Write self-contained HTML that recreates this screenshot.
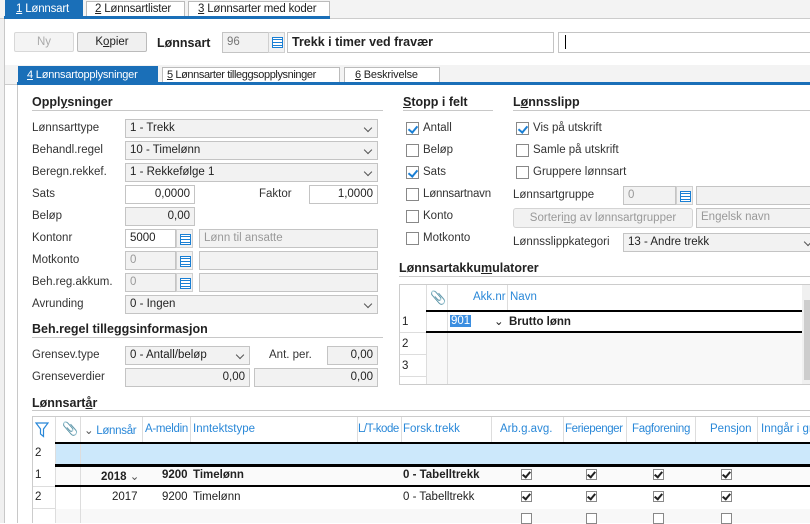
<!DOCTYPE html>
<html><head><meta charset="utf-8"><style>
*{box-sizing:border-box;margin:0;padding:0}
body{width:810px;height:523px;overflow:hidden;background:#fff;font-family:"Liberation Sans",Arial,sans-serif;font-size:11.5px;color:#222;position:relative}
.a{position:absolute}
.lbl{position:absolute;font-size:11.5px;color:#333;line-height:14px;white-space:nowrap}
.h{position:absolute;font-weight:bold;font-size:12.5px;color:#222;white-space:nowrap}
.hl{position:absolute;height:1px;background:#c8c8c8}
.in{position:absolute;height:19px;border:1px solid #c4c4c4;background:#fff;line-height:17px;padding:0 4px;font-size:11.5px;white-space:nowrap;overflow:hidden}
.ro{background:#f2f2f2;color:#999}
.r{text-align:right}
.sel{position:absolute;height:19px;border:1px solid #c4c4c4;background:#f2f2f2;line-height:17px;padding:0 4px;font-size:11.5px;white-space:nowrap}
.sel:after{content:"";position:absolute;right:6px;top:5px;width:5px;height:5px;border-right:1px solid #555;border-bottom:1px solid #555;transform:rotate(45deg)}
.ico{position:absolute;width:17px;height:19px;background:#f2f2f2;border:1px solid #d0d0d0}
.ico:before{content:"";position:absolute;left:3px;top:4px;width:9px;height:9px;border:1px solid #1a7fd4;background:repeating-linear-gradient(#fff 0 1px,#1a7fd4 1px 2px,#fff 2px 3px)}
.cb{position:absolute;width:13px;height:13px;border:1px solid #888;background:#fff}
.cb.k:after{content:"";position:absolute;left:3px;top:1px;width:4px;height:7px;border-right:2px solid #1a7fd4;border-bottom:2px solid #1a7fd4;transform:rotate(40deg)}
.tab{position:absolute;height:17px;line-height:17px;padding:0 4px;font-size:11.5px;border:1px solid #bbb;border-bottom:none;background:#fff;white-space:nowrap;overflow:hidden;letter-spacing:-0.2px}
.tab.on{background:#1a6fb8;color:#fff;border-color:#1a6fb8}
.g{position:absolute;font-size:11.5px;white-space:nowrap}
.gh{color:#2a88d8}
.vl{position:absolute;width:1px;background:#ddd}
.bl{position:absolute;height:2px;background:#000}
.cc{position:absolute;width:11px;height:11px;border:1px solid #888;background:#fff}
.cc.k:after{content:"";position:absolute;left:2px;top:0px;width:3px;height:6px;border-right:2px solid #222;border-bottom:2px solid #222;transform:rotate(40deg)}
u{text-decoration:underline}
</style></head><body>
<div class="a" style="left:0;top:0;width:4px;height:523px;background:#f0f0f0"></div>
<div class="a" style="left:0;top:0;width:810px;height:19px;background:#f3f3f3;border-bottom:1px solid #ccc"></div>
<div class="a" style="left:4px;top:19px;width:1px;height:504px;background:#c8c8c8"></div>
<div class="a" style="left:4px;top:16px;width:326px;height:3px;background:#1a6fb8"></div>
<div class="tab on" style="left:5px;top:0;width:78px;padding-left:10px"><u>1</u> Lønnsart</div>
<div class="tab" style="left:86px;top:1px;width:99px;height:15px;line-height:15px;padding-left:8px"><u>2</u> Lønnsartlister</div>
<div class="tab" style="left:188px;top:1px;width:142px;height:15px;line-height:15px;padding-left:9px"><u>3</u> Lønnsarter med koder</div>
<div class="a" style="left:14px;top:32px;width:60px;height:20px;border:1px solid #d8d8d8;border-radius:2px;background:#f4f4f4;color:#aaa;text-align:center;line-height:18px">Ny</div>
<div class="a" style="left:77px;top:32px;width:70px;height:20px;border:1px solid #bbb;border-radius:2px;background:#f0f0f0;text-align:center;line-height:18px">K<u>o</u>pier</div>
<div class="h" style="left:157px;top:36px;font-size:12.5px">Lønnsart</div>
<div class="in ro" style="left:222px;top:32px;width:47px;height:21px;line-height:19px;color:#777">96</div>
<div class="ico" style="left:268px;top:32px;height:21px"></div>
<div class="in" style="left:287px;top:32px;width:267px;height:21px;line-height:19px;font-weight:bold;font-size:12.5px">Trekk i timer ved fravær</div>
<div class="in" style="left:558px;top:32px;width:260px;height:21px"><span style="display:inline-block;width:1px;height:14px;background:#000;margin-top:2px;margin-left:2px"></span></div>
<div class="a" style="left:5px;top:65px;width:805px;height:20px;background:#f3f3f3;border-bottom:1px solid #ccc"></div>
<div class="a" style="left:17px;top:82px;width:793px;height:3px;background:#1a6fb8"></div>
<div class="a" style="left:17px;top:85px;width:1px;height:438px;background:#c8c8c8"></div>
<div class="tab on" style="left:18px;top:66px;width:140px;font-size:11px;padding-left:8px"><u>4</u> Lønnsartopplysninger</div>
<div class="tab" style="left:162px;top:67px;width:178px;height:15px;line-height:15px;font-size:11px;letter-spacing:-0.4px"><u>5</u> Lønnsarter tilleggsopplysninger</div>
<div class="tab" style="left:344px;top:67px;width:96px;height:15px;line-height:15px;font-size:11px;padding-left:10px"><u>6</u> Beskrivelse</div>
<div class="h" style="left:32px;top:95px">Oppl<u>y</u>sninger</div>
<div class="hl" style="left:32px;top:110px;width:351px"></div>
<div class="lbl" style="left:32px;top:121px">Lønnsarttype</div>
<div class="sel" style="left:125px;top:119px;width:253px">1 - Trekk</div>
<div class="lbl" style="left:32px;top:143px">Behandl.regel</div>
<div class="sel" style="left:125px;top:141px;width:253px">10 - Timelønn</div>
<div class="lbl" style="left:32px;top:165px">Beregn.rekkef.</div>
<div class="sel" style="left:125px;top:163px;width:253px">1 - Rekkefølge 1</div>
<div class="lbl" style="left:32px;top:187px">Sats</div>
<div class="in r" style="left:125px;top:185px;width:70px">0,0000</div>
<div class="lbl" style="left:259px;top:187px">Faktor</div>
<div class="in r" style="left:309px;top:185px;width:69px">1,0000</div>
<div class="lbl" style="left:32px;top:209px">Beløp</div>
<div class="in ro r" style="left:125px;top:207px;width:70px;color:#222">0,00</div>
<div class="lbl" style="left:32px;top:231px">Kontonr</div>
<div class="in" style="left:125px;top:229px;width:51px">5000</div>
<div class="ico" style="left:176px;top:229px"></div>
<div class="in ro" style="left:199px;top:229px;width:179px">Lønn til ansatte</div>
<div class="lbl" style="left:32px;top:253px">Motkonto</div>
<div class="in ro" style="left:125px;top:251px;width:51px">0</div>
<div class="ico" style="left:176px;top:251px"></div>
<div class="in ro" style="left:199px;top:251px;width:179px"></div>
<div class="lbl" style="left:32px;top:275px">Beh.reg.akkum.</div>
<div class="in ro" style="left:125px;top:273px;width:51px">0</div>
<div class="ico" style="left:176px;top:273px"></div>
<div class="in ro" style="left:199px;top:273px;width:179px"></div>
<div class="lbl" style="left:32px;top:297px">Avrunding</div>
<div class="sel" style="left:125px;top:295px;width:253px">0 - Ingen</div>
<div class="h" style="left:32px;top:322px">Beh.re<u>g</u>el tilleggsinformasjon</div>
<div class="hl" style="left:32px;top:337px;width:351px"></div>
<div class="lbl" style="left:32px;top:348px">Grensev.type</div>
<div class="sel" style="left:125px;top:346px;width:125px">0 - Antall/beløp</div>
<div class="lbl" style="left:269px;top:348px">Ant. per.</div>
<div class="in ro r" style="left:327px;top:346px;width:51px;color:#222">0,00</div>
<div class="lbl" style="left:32px;top:370px">Grenseverdier</div>
<div class="in ro r" style="left:125px;top:368px;width:125px;color:#222">0,00</div>
<div class="in ro r" style="left:254px;top:368px;width:124px;color:#222">0,00</div>
<div class="h" style="left:403px;top:95px"><u>S</u>topp i felt</div>
<div class="hl" style="left:403px;top:110px;width:90px"></div>
<div class="cb k" style="left:406px;top:122px"></div><div class="lbl" style="left:423px;top:121px">Antall</div>
<div class="cb" style="left:406px;top:144px"></div><div class="lbl" style="left:423px;top:143px">Beløp</div>
<div class="cb k" style="left:406px;top:166px"></div><div class="lbl" style="left:423px;top:165px">Sats</div>
<div class="cb" style="left:406px;top:188px"></div><div class="lbl" style="left:423px;top:187px;letter-spacing:-0.2px">Lønnsartnavn</div>
<div class="cb" style="left:406px;top:210px"></div><div class="lbl" style="left:423px;top:209px">Konto</div>
<div class="cb" style="left:406px;top:232px"></div><div class="lbl" style="left:423px;top:231px">Motkonto</div>
<div class="h" style="left:513px;top:95px">L<u>ø</u>nnsslipp</div>
<div class="hl" style="left:513px;top:110px;width:297px"></div>
<div class="cb k" style="left:516px;top:122px"></div><div class="lbl" style="left:533px;top:121px">Vis på utskrift</div>
<div class="cb" style="left:516px;top:144px"></div><div class="lbl" style="left:533px;top:143px">Samle på utskrift</div>
<div class="cb" style="left:516px;top:166px"></div><div class="lbl" style="left:533px;top:165px">Gruppere lønnsart</div>
<div class="lbl" style="left:513px;top:188px">Lønnsartgruppe</div>
<div class="in ro" style="left:623px;top:186px;width:53px">0</div>
<div class="ico" style="left:676px;top:186px"></div>
<div class="in ro" style="left:696px;top:186px;width:120px"></div>
<div class="a" style="left:513px;top:208px;width:180px;height:20px;border:1px solid #d4d4d4;border-radius:3px;background:#f2f2f2;color:#999;text-align:center;line-height:18px;white-space:nowrap">Sorteri<u>n</u>g av lønnsartgrupper</div>
<div class="in ro" style="left:696px;top:208px;width:120px;height:20px">Engelsk navn</div>
<div class="lbl" style="left:513px;top:235px">Lønnsslippkategori</div>
<div class="sel" style="left:623px;top:233px;width:195px">13 - Andre trekk</div>
<div class="h" style="left:399px;top:261px">Lønnsartakku<u>m</u>ulatorer</div>
<div class="hl" style="left:399px;top:276px;width:411px"></div>
<div class="a" style="left:399px;top:284px;width:411px;height:101px;border:1px solid #ccc;background:#fff"></div>
<div class="a" style="left:426px;top:332px;width:376px;height:52px;background:#f8f8f8"></div>
<div class="vl" style="left:426px;top:285px;height:99px"></div>
<div class="vl" style="left:447px;top:285px;height:99px"></div>
<div class="vl" style="left:507px;top:285px;height:26px"></div>
<div class="a" style="left:400px;top:332px;width:26px;height:1px;background:#ddd"></div>
<div class="a" style="left:400px;top:354px;width:26px;height:1px;background:#ddd"></div>
<div class="a" style="left:400px;top:376px;width:26px;height:1px;background:#ddd"></div>
<div class="a" style="left:802px;top:285px;width:8px;height:99px;background:#f0f0f0"></div>
<div class="a" style="left:804px;top:300px;width:6px;height:80px;background:#cdcdcd"></div>
<div class="g" style="left:430px;top:290px;color:#2a88d8;font-size:13px">&#x1F4CE;</div>
<div class="g gh" style="left:473px;top:291px">Akk.nr</div>
<div class="g gh" style="left:510px;top:291px">Navn</div>
<div class="bl" style="left:426px;top:310px;width:376px"></div>
<div class="bl" style="left:426px;top:331px;width:376px"></div>
<div class="g" style="left:402px;top:316px">1</div>
<div class="g" style="left:450px;top:315px;background:#3b8ee0;color:#fff;padding:0 1px">901</div>
<div class="g" style="left:494px;top:314px">&#8964;</div>
<div class="g" style="left:509px;top:316px;font-weight:bold">Brutto lønn</div>
<div class="g" style="left:402px;top:338px">2</div>
<div class="g" style="left:402px;top:360px">3</div>
<div class="h" style="left:32px;top:396px">Lønnsart<u>å</u>r</div>
<div class="hl" style="left:32px;top:410px;width:778px"></div>
<div class="a" style="left:32px;top:416px;width:778px;height:107px;border:1px solid #ccc;border-right:none;border-bottom:none;background:#fff"></div>
<div class="a" style="left:55px;top:443px;width:755px;height:22px;background:#cce8fb"></div>
<div class="a" style="left:55px;top:466px;width:755px;height:20px;background:#fafafa"></div>
<div class="a" style="left:55px;top:509px;width:755px;height:14px;background:#f8f8f8"></div>
<div class="vl" style="left:55px;top:417px;height:106px"></div>
<div class="vl" style="left:80px;top:417px;height:106px"></div>
<div class="vl" style="left:142px;top:417px;height:26px"></div>
<div class="vl" style="left:190px;top:417px;height:26px"></div>
<div class="vl" style="left:357px;top:417px;height:26px"></div>
<div class="vl" style="left:401px;top:417px;height:26px"></div>
<div class="vl" style="left:491px;top:417px;height:26px"></div>
<div class="vl" style="left:563px;top:417px;height:26px"></div>
<div class="vl" style="left:626px;top:417px;height:26px"></div>
<div class="vl" style="left:695px;top:417px;height:26px"></div>
<div class="vl" style="left:757px;top:417px;height:26px"></div>
<div class="a" style="left:33px;top:486px;width:22px;height:1px;background:#ddd"></div>
<div class="a" style="left:33px;top:508px;width:22px;height:1px;background:#ddd"></div>
<svg class="a" style="left:35px;top:422px" width="14" height="16" viewBox="0 0 14 16"><path d="M1 1h12L8.5 7v7.5L5.5 12V7z" fill="none" stroke="#2a88d8" stroke-width="1.2"/></svg>
<div class="g" style="left:62px;top:421px;color:#2a88d8;font-size:13px">&#x1F4CE;</div>
<div class="g gh" style="left:84px;top:423px;letter-spacing:-0.3px"><span style="color:#555">&#8964;</span> Lønnsår</div>
<div class="g gh" style="left:145px;top:423px;letter-spacing:-0.3px">A-meldin</div>
<div class="g gh" style="left:193px;top:423px">Inntektstype</div>
<div class="g gh" style="left:358px;top:423px;letter-spacing:-0.5px">L/T-kode</div>
<div class="g gh" style="left:403px;top:423px">Forsk.trekk</div>
<div class="g gh" style="left:500px;top:423px">Arb.g.avg.</div>
<div class="g gh" style="left:565px;top:423px;letter-spacing:-0.4px">Feriepenger</div>
<div class="g gh" style="left:632px;top:423px;letter-spacing:-0.3px">Fagforening</div>
<div class="g gh" style="left:710px;top:423px">Pensjon</div>
<div class="g gh" style="left:761px;top:423px">Inngår i gr</div>
<div class="bl" style="left:55px;top:442px;width:755px"></div>
<div class="bl" style="left:55px;top:464px;width:755px;height:3px"></div>
<div class="bl" style="left:55px;top:485px;width:755px"></div>
<div class="g" style="left:35px;top:447px">2</div>
<div class="g" style="left:35px;top:469px">1</div>
<div class="g" style="left:35px;top:491px">2</div>
<div class="g" style="left:101px;top:469px;font-weight:bold">2018 <span style="font-weight:normal;color:#555">&#8964;</span></div>
<div class="g" style="left:162px;top:469px;font-weight:bold">9200</div>
<div class="g" style="left:193px;top:469px;font-weight:bold">Timelønn</div>
<div class="g" style="left:403px;top:469px;font-weight:bold">0 - Tabelltrekk</div>
<div class="g" style="left:112px;top:491px">2017</div>
<div class="g" style="left:162px;top:491px">9200</div>
<div class="g" style="left:193px;top:491px">Timelønn</div>
<div class="g" style="left:403px;top:491px">0 - Tabelltrekk</div>
<div class="cc k" style="left:521px;top:469px"></div><div class="cc k" style="left:586px;top:469px"></div><div class="cc k" style="left:653px;top:469px"></div><div class="cc k" style="left:721px;top:469px"></div>
<div class="cc k" style="left:521px;top:491px"></div><div class="cc k" style="left:586px;top:491px"></div><div class="cc k" style="left:653px;top:491px"></div><div class="cc k" style="left:721px;top:491px"></div>
<div class="cc" style="left:521px;top:513px"></div><div class="cc" style="left:586px;top:513px"></div><div class="cc" style="left:653px;top:513px"></div><div class="cc" style="left:721px;top:513px"></div>
</body></html>
